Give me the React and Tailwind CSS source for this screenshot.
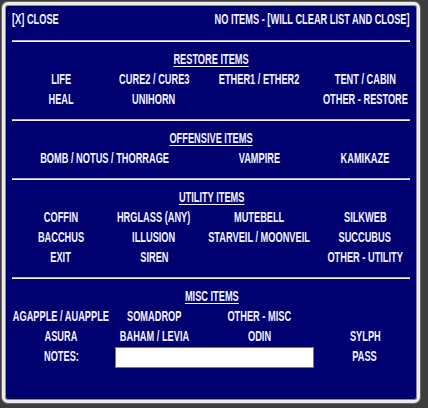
import React from 'react';

const FONT = { fontFamily: '"Liberation Sans", Arial, sans-serif' };

function T({ children, align = 'center', underline = false }) {
    const origin = align === 'left' ? 'origin-left' : align === 'right' ? 'origin-right' : 'origin-center';
    return (
        <span
            className={`inline-block whitespace-nowrap scale-x-[0.66] font-bold text-[14px] leading-[20px] text-[#f2f2ff] ${origin} ${
                underline ? 'underline underline-offset-[2px] decoration-1' : ''
            }`}
        >
            {children}
        </span>
    );
}

function Cell({ children, wide }) {
    return (
        <div className={`flex h-[20px] items-center justify-center ${wide ? 'col-span-2' : ''}`}>
            {children ? <T>{children}</T> : null}
        </div>
    );
}

function Divider({ first }) {
    return (
        <div
            className={`h-[2px] w-[398px] border-t border-[#b8b8b8] bg-[#f4f4f4] ${
                first ? 'mt-[11px]' : 'mt-[10px]'
            }`}
        />
    );
}

function Section({ title, children }) {
    return (
        <div className="mt-[7px]">
            <div className="flex h-[20px] items-center justify-center">
                <T underline>{title}</T>
            </div>
            <div className="grid grid-cols-[98px_88px_122px_90px]">{children}</div>
        </div>
    );
}

export default function App() {
    return (
        <div className="h-[408px] w-[428px] bg-[#3d3d3d] p-[2px]" style={FONT}>
            <div className="h-[401px] w-[418px] rounded-[6px] border-[3px] border-[#ececec] bg-[#000070] pl-[7px] pr-[6px] pt-[4px] shadow-[0_0_0_1px_#6a6a6a,inset_0_0_0_1px_#8c8c8c]">
                <div className="flex h-[20px] w-[398px] items-center justify-between">
                    <T align="left">[X] CLOSE</T>
                    <T align="right">NO ITEMS - [WILL CLEAR LIST AND CLOSE]</T>
                </div>

                <Divider first />
                <Section title="RESTORE ITEMS">
                    <Cell>LIFE</Cell>
                    <Cell>CURE2 / CURE3</Cell>
                    <Cell>ETHER1 / ETHER2</Cell>
                    <Cell>TENT / CABIN</Cell>
                    <Cell>HEAL</Cell>
                    <Cell>UNIHORN</Cell>
                    <Cell />
                    <Cell>OTHER - RESTORE</Cell>
                </Section>

                <Divider />
                <Section title="OFFENSIVE ITEMS">
                    <Cell wide>BOMB / NOTUS / THORRAGE</Cell>
                    <Cell>VAMPIRE</Cell>
                    <Cell>KAMIKAZE</Cell>
                </Section>

                <Divider />
                <Section title="UTILITY ITEMS">
                    <Cell>COFFIN</Cell>
                    <Cell>HRGLASS (ANY)</Cell>
                    <Cell>MUTEBELL</Cell>
                    <Cell>SILKWEB</Cell>
                    <Cell>BACCHUS</Cell>
                    <Cell>ILLUSION</Cell>
                    <Cell>STARVEIL / MOONVEIL</Cell>
                    <Cell>SUCCUBUS</Cell>
                    <Cell>EXIT</Cell>
                    <Cell>SIREN</Cell>
                    <Cell />
                    <Cell>OTHER - UTILITY</Cell>
                </Section>

                <Divider />
                <Section title="MISC ITEMS">
                    <Cell>AGAPPLE / AUAPPLE</Cell>
                    <Cell>SOMADROP</Cell>
                    <Cell>OTHER - MISC</Cell>
                    <Cell />
                    <Cell>ASURA</Cell>
                    <Cell>BAHAM / LEVIA</Cell>
                    <Cell>ODIN</Cell>
                    <Cell>SYLPH</Cell>
                    <Cell>NOTES:</Cell>
                    <div className="col-span-2 flex h-[22px] items-center pl-[5px] pr-[6px]">
                        <input
                            type="text"
                            className="h-[21px] w-full border border-[#7a7a7a] bg-white px-1 text-[13px] text-black outline-none"
                        />
                    </div>
                    <Cell>PASS</Cell>
                </Section>
            </div>
        </div>
    );
}
